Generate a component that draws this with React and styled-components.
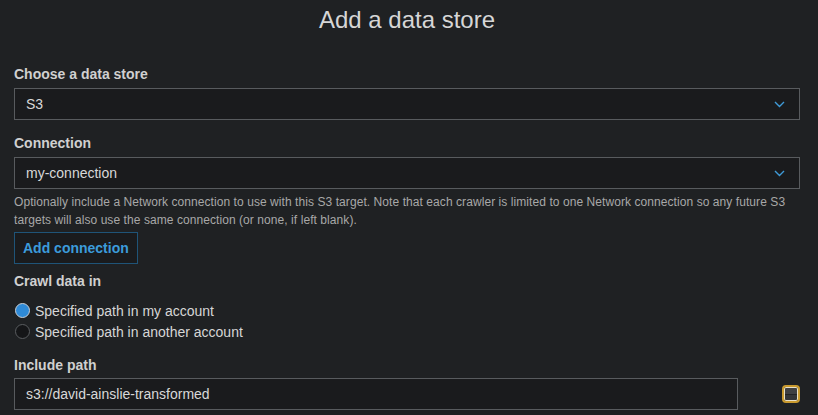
import React from 'react'
import styled, { createGlobalStyle } from 'styled-components'

const GlobalStyle = createGlobalStyle`
html, body {
    margin:0;
    padding:0;
    background:#1f2123;
}
body{
    font-family:"Liberation Sans", Arial, sans-serif;
    color:#d4d4d4;
}
`

const Page = styled.div`
width:818px;
height:415px;
box-sizing:border-box;
padding:0 18px 0 14px;
overflow:hidden;
`

const Title = styled.h1`
margin:0 0 24px;
font-size:24px;
line-height:40px;
font-weight:400;
text-align:center;
color:#d6d6d6;
`

const Field = styled.div`
display:flex;
flex-direction:column;
margin-bottom:${p => p.$gap || 13}px;
`

const Label = styled.div`
font-size:14px;
line-height:20px;
font-weight:bold;
color:#d0d0d0;
margin-bottom:${p => p.$below || 4}px;
`

const Box = styled.div`
display:flex;
align-items:center;
justify-content:space-between;
box-sizing:border-box;
height:32px;
width:${p => p.$width || '100%'};
padding:0 14px 0 11px;
background:#1a1b1d;
border:1px solid #585b5e;
font-size:14px;
color:#d8d8d8;
`

const Chevron = () => (
    <svg width="11" height="7" viewBox="0 0 11 7">
        <path d="M1 1 L5.5 5.5 L10 1" fill="none" stroke="#3f9bd8" strokeWidth="1.4" />
    </svg>
)

const Help = styled.p`
margin:4px 0 3px;
font-size:12px;
line-height:18px;
letter-spacing:0.07px;
color:#a8a8a8;
`

const Button = styled.button`
align-self:flex-start;
box-sizing:border-box;
height:32px;
padding:0 8px;
background:#1a1b1d;
border:1px solid #1f5478;
color:#3c9bdb;
font-family:inherit;
font-size:14px;
font-weight:bold;
`

const Radios = styled.div`
display:flex;
flex-direction:column;
`

const RadioRow = styled.label`
display:flex;
align-items:center;
gap:5px;
height:21px;
font-size:14px;
color:#d6d6d6;
`

const Dot = styled.span`
box-sizing:border-box;
width:15px;
height:15px;
margin-left:1px;
border-radius:50%;
border:1px solid ${p => p.$on ? '#c9ced3' : '#5a5d60'};
background:${p => p.$on ? '#2f8ad6' : '#151618'};
`

const PathRow = styled.div`
display:flex;
align-items:center;
justify-content:space-between;
`

const Toggle = styled.span`
box-sizing:border-box;
width:18px;
height:18px;
border-radius:4px;
border:2px solid #c99a2e;
box-shadow:inset 0 0 0 1px #e8e0c8;
background:linear-gradient(#3f4042 0 48%, #222325 48% 56%, #343537 56%);
`

const App = () => {
    return (
        <Page>
            <GlobalStyle />
            <Title>Add a data store</Title>
            <Field>
                <Label>Choose a data store</Label>
                <Box>S3<Chevron /></Box>
            </Field>
            <Field $gap={7}>
                <Label>Connection</Label>
                <Box>my-connection<Chevron /></Box>
                <Help>Optionally include a Network connection to use with this S3 target. Note that each crawler is limited to one Network connection so any future S3 targets will also use the same connection (or none, if left blank).</Help>
                <Button>Add connection</Button>
            </Field>
            <Field $gap={13}>
                <Label $below={9}>Crawl data in</Label>
                <Radios>
                    <RadioRow><Dot $on />Specified path in my account</RadioRow>
                    <RadioRow><Dot />Specified path in another account</RadioRow>
                </Radios>
            </Field>
            <Field>
                <Label $below={3}>Include path</Label>
                <PathRow>
                    <Box $width="724px">s3://david-ainslie-transformed</Box>
                    <Toggle />
                </PathRow>
            </Field>
        </Page>
    )
}

export default App
